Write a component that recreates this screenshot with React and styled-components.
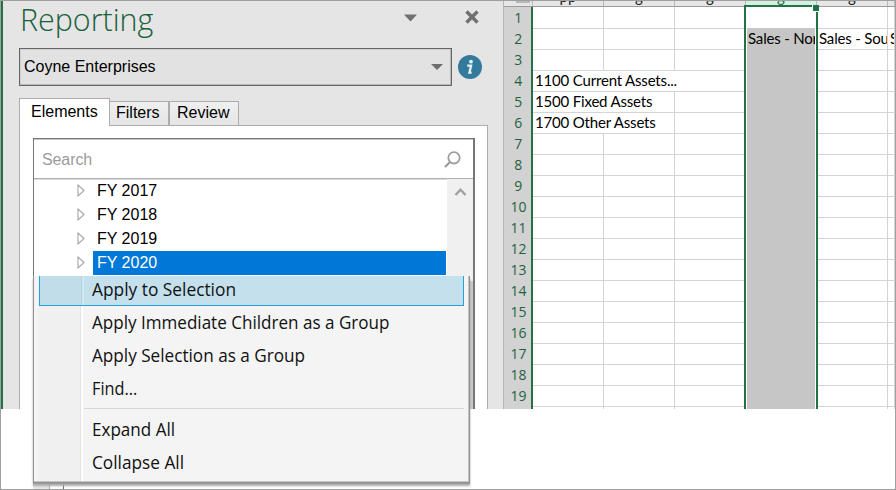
import React from 'react';
import styled, { createGlobalStyle, css } from 'styled-components';

const Global = createGlobalStyle`
  * { box-sizing: border-box; }
  body { margin: 0; background: #fff; overflow: hidden; }
`;
const UI = '"Liberation Sans", sans-serif';
const SEGOE = '"Open Sans", sans-serif';
const SHEET = 'Lato, sans-serif';

const Frame = styled.div`
  position: relative;
  width: 896px;
  height: 490px;
  border: 1px solid #a0a0a0;
  background: #fff;
  overflow: hidden;
`;
const Workspace = styled.div`
  display: flex;
  height: 408px;
  overflow: hidden;
`;

const Pane = styled.aside`
  width: 502px;
  flex: none;
  display: flex;
  flex-direction: column;
  padding: 0 15px 0 16px;
  background: #e5e5e5;
  border-left: 2px solid #217346;
`;
const PaneHeader = styled.header`
  display: flex;
  height: 47px;
  flex: none;
`;
const Fit = styled.span`
  display: inline-block;
  white-space: pre;
  transform-origin: 0 50%;
  transform: scaleX(${(p) => p.$x || 1});
`;
const Title = styled.h1`
  margin: -2px 0 0 1px;
  width: 384px;
  font: 300 32px/40px ${SEGOE};
  color: #17603a;
  white-space: nowrap;
`;
const HeaderIcons = styled.div`
  display: flex;
  gap: 48px;
  height: 14px;
  margin-top: 9px;
`;
const ProfileRow = styled.div`
  display: flex;
  align-items: center;
  gap: 5px;
  height: 38px;
  flex: none;
`;
const Select = styled.div`
  display: flex;
  align-items: center;
  justify-content: space-between;
  width: 433px;
  height: 38px;
  padding: 0 8px 1px 4px;
  border: 1px solid #666;
  box-shadow: inset -1px -1px #b9b9b9, inset 1px 1px #cfcfcf;
  background: #e2e2e2;
  font: 16px/18px ${UI};
  color: #000;
`;
const Tabs = styled.nav`
  display: flex;
  align-items: flex-end;
  height: 39px;
  flex: none;
`;
const Tab = styled.div`
  position: relative;
  width: ${(p) => p.$w}px;
  height: ${(p) => (p.$active ? 28 : 24)}px;
  padding-left: ${(p) => p.$pad}px;
  border: 1px solid #acacac;
  border-left-width: ${(p) => (p.$joined ? 0 : 1)}px;
  border-bottom: 0;
  background: linear-gradient(#f0f0f0, #e5e5e5);
  font: 16px/22px ${UI};
  ${(p) => p.$active && css`
    background: #fff;
    margin-bottom: -1px;
    line-height: 25px;
    z-index: 1;
  `}
`;
const TabBody = styled.div`
  width: 469px;
  flex: 1;
  padding: 12px 13px 0;
  border: 1px solid #acacac;
  border-bottom: 0;
  background: #fff;
`;
const TreeBox = styled.section`
  width: 442px;
  height: 100%;
  border: 1px solid #777;
  border-right: 2px solid #777;
  border-bottom: 0;
  box-shadow: inset 0 1px #c5c5c5;
`;
const SearchBar = styled.div`
  display: flex;
  justify-content: space-between;
  align-items: center;
  height: 40px;
  padding: 2px 12px 0 8px;
  border-bottom: 1px solid #b0b0b0;
  box-shadow: 0 1px #dcdcdc;
  font: 16px/18px ${UI};
  letter-spacing: -0.1px;
  color: #9b9b9b;
  svg { margin-bottom: 1px; }
`;
const TreeBody = styled.div`
  display: flex;
  justify-content: space-between;
  height: 230px;
`;
const TreeRows = styled.div`
  width: 412px;
`;
const TreeRow = styled.div`
  display: flex;
  align-items: center;
  height: 24px;
  padding-left: 43px;
  gap: 8px;
  svg { margin-bottom: 1px; }
`;
const TreeLabel = styled.div`
  flex: 1;
  height: 24px;
  padding-left: 4px;
  font: 16px/23px ${UI};
  color: ${(p) => (p.$selected ? '#fff' : '#000')};
  background: ${(p) => (p.$selected ? '#0078d7' : 'transparent')};
`;
const Scrollbar = styled.div`
  width: 26px;
  padding: 4px 0 0 7px;
  background: linear-gradient(#f0f0f0 102px, #c8c8c8 102px);
`;

const Sheet = styled.main`
  position: relative;
  flex: 1;
  border-left: 1px solid #b5b5b5;
`;
const COLS = '27px 2px 71px 71px 71px 71px 71px 7px';
const ColumnHeads = styled.div`
  display: grid;
  grid-template-columns: ${COLS};
  height: 6px;
  background: #e6e6e6;
  border-bottom: 1px solid #9c9c9c;
`;
const Head = styled.div`
  display: flex;
  align-items: flex-end;
  justify-content: center;
  height: 5px;
  overflow: hidden;
  border-right: 1px solid #b8b8b8;
  background: ${(p) => (p.$selected ? '#d3f0e0' : '#e6e6e6')};
  font: 15px/18px ${SHEET};
  color: ${(p) => (p.$selected ? '#217346' : '#222')};
  span { margin-bottom: 1px; }
`;
const Corner = styled.div`
  height: 2px;
  width: 14px;
  margin-left: 12px;
  background: #b8b8b8;
`;
const SheetRow = styled.div`
  display: grid;
  grid-template-columns: ${COLS};
  height: 21px;
`;
const RowNumber = styled.div`
  border-bottom: 1px solid #b0b0b0;
  background: #d2d2d2;
  text-align: center;
  padding-left: 2px;
  font: 15px/21px ${SEGOE};
  color: #1d6340;
  ${Fit} { transform-origin: 50% 50%; }
`;
const Rule = styled.div`
  background: #217346;
`;
const Cell = styled.div`
  min-width: 0;
  padding-left: 2px;
  border-right: 1px solid ${(p) => (p.$spill ? 'transparent' : '#d4d4d4')};
  border-bottom: 1px solid #d4d4d4;
  overflow: ${(p) => (p.$clip ? 'hidden' : 'visible')};
  font: 15px/20px ${SHEET};
  letter-spacing: -0.18px;
  color: #000;
  white-space: nowrap;
  ${(p) => p.$shaded && css`
    background: #c6c6c6;
    border-bottom-color: #a6a6a6;
  `}
`;
const SelectionOutline = styled.div`
  position: absolute;
  left: 240px;
  top: 4px;
  width: 74px;
  height: 420px;
  border: 2px solid #217346;
  box-shadow: inset 0 0 0 1px #fff;
`;
const FillHandle = styled.div`
  position: absolute;
  left: 308px;
  top: 4px;
  width: 7px;
  height: 7px;
  background: #217346;
  border: solid #fff;
  border-width: 0 0 1px 1px;
`;

const Menu = styled.div`
  position: absolute;
  left: 32px;
  top: 275px;
  width: 437px;
  height: 207px;
  padding: 0 5px;
  border: solid #929292;
  border-width: 0 1px 1px 1px;
  box-shadow: inset -1px -1px #c4c4c4, 0 1px #999, 0 3px 2px #aaa;
  background: linear-gradient(90deg, #f4f4f4 4px, #f0f0f0 4px 46px, #e1e1e1 46px 47px, #fff 47px 49px, #f4f4f4 49px);
`;
const MenuItem = styled.div`
  width: 425px;
  height: ${(p) => (p.$active ? 30 : 33)}px;
  padding-left: ${(p) => (p.$active ? 52 : 53)}px;
  font: 17.5px/33px ${SEGOE};
  color: #111;
  white-space: nowrap;
  ${(p) => p.$active && css`
    border: 1px solid #26a0da;
    border-top: 0;
    line-height: 26px;
    background: linear-gradient(90deg, #c0dde9 41px, #b5d0dc 41px 42px, #d0e7f0 42px 44px, #c4e0ed 44px);
  `}
`;
const Separator = styled.div`
  height: 1px;
  margin: 3px 0 4px 45px;
  width: 380px;
  background: #d7d7d7;
`;
const Underlay = styled.div`
  position: absolute;
  left: 32px;
  top: 408px;
  width: 437px;
  height: 80px;
  background: linear-gradient(90deg, #e5e5e5 16px, #acacac 16px 17px, #fff 17px 30px, #666 30px 31px, #fff 31px);
`;

const Caret = ({ w = 13, h = 7 }) => (
  <svg width={w} height={h} viewBox="0 0 13 7" preserveAspectRatio="none"><path d="M0 0h13L6.5 7z" fill="#6d6d6d" /></svg>
);
const heads = ['pp', 'g', 'g', 'g', 'g'];
const assets = { 4: '1100 Current Assets...', 5: '1500 Fixed Assets', 6: '1700 Other Assets' };
const years = ['FY 2017', 'FY 2018', 'FY 2019', 'FY 2020'];
const Item = ({ active, x = 0.975, children }) => (
  <MenuItem $active={active}><Fit $x={x}>{children}</Fit></MenuItem>
);

export default function App() {
  return (
    <Frame>
      <Global />
      <Workspace>
        <Pane>
          <PaneHeader>
            <Title><Fit $x={0.95}>Reporting</Fit></Title>
            <HeaderIcons>
              <svg width="13" height="14"><path d="M0 4.5h13L6.5 11.5z" fill="#707070" /></svg>
              <svg width="14" height="14"><path d="M1.5 1.5l11 11M12.5 1.5l-11 11" stroke="#707070" strokeWidth="3.4" /></svg>
            </HeaderIcons>
          </PaneHeader>
          <ProfileRow>
            <Select>Coyne Enterprises<Caret w={12} h={6} /></Select>
            <svg width="26" height="26" viewBox="0 0 26 26">
              <circle cx="13" cy="13" r="12" fill="#347a9b" />
              <circle cx="14" cy="7.7" r="1.9" fill="#e3eff4" />
              <path d="M10.2 11.6h3.9l-1.7 7h2.2" fill="none" stroke="#e3eff4" strokeWidth="2.3" />
            </svg>
          </ProfileRow>
          <Tabs>
            <Tab $active $w={91} $pad={11}>Elements</Tab>
            <Tab $joined $w={59} $pad={6}>Filters</Tab>
            <Tab $w={70} $pad={7}>Review</Tab>
          </Tabs>
          <TabBody>
            <TreeBox>
              <SearchBar>
                Search
                <svg width="17" height="17" viewBox="0 0 17 17" fill="none" stroke="#9d9d9d">
                  <circle cx="10" cy="6.8" r="5.7" strokeWidth="1.8" /><path d="M6 11L1 16" strokeWidth="2.3" />
                </svg>
              </SearchBar>
              <TreeBody>
                <TreeRows>
                  {years.map((y) => (
                    <TreeRow key={y}>
                      <svg width="8" height="13" fill="none"><path d="M1 1v11l6-5.5z" stroke="#a6a6a6" strokeWidth="1.1" /></svg>
                      <TreeLabel $selected={y === 'FY 2020'}>{y}</TreeLabel>
                    </TreeRow>
                  ))}
                </TreeRows>
                <Scrollbar>
                  <svg width="13" height="10" fill="none"><path d="M1.5 8L6.5 2.7L11.5 8" stroke="#a0a0a0" strokeWidth="2.3" /></svg>
                </Scrollbar>
              </TreeBody>
            </TreeBox>
          </TabBody>
        </Pane>
        <Sheet>
          <ColumnHeads>
            <Corner /><Head />
            {heads.map((h, i) => <Head key={i} $selected={i === 3}><span>{h}</span></Head>)}
            <Head />
          </ColumnHeads>
          {Array.from({ length: 20 }, (_, i) => i + 1).map((n) => (
            <SheetRow key={n}>
              <RowNumber>{n < 20 && <Fit $x={0.93}>{n}</Fit>}</RowNumber>
              <Rule />
              <Cell $spill={n >= 4 && n <= 6}>{assets[n]}</Cell>
              <Cell $spill={n === 4} />
              <Cell />
              <Cell $shaded={n > 1} $clip>{n === 2 && 'Sales - Nor'}</Cell>
              <Cell $clip>{n === 2 && 'Sales - Sou'}</Cell>
              <Cell $clip>{n === 2 && 'S'}</Cell>
            </SheetRow>
          ))}
          <SelectionOutline />
          <FillHandle />
        </Sheet>
      </Workspace>
      <Underlay />
      <Menu>
        <Item active x={0.99}>Apply to Selection</Item>
        <Item>Apply Immediate Children as a Group</Item>
        <Item x={0.98}>Apply Selection as a Group</Item>
        <Item x={0.93}>Find...</Item>
        <Separator />
        <Item>Expand All</Item>
        <Item x={0.985}>Collapse All</Item>
      </Menu>
    </Frame>
  );
}
